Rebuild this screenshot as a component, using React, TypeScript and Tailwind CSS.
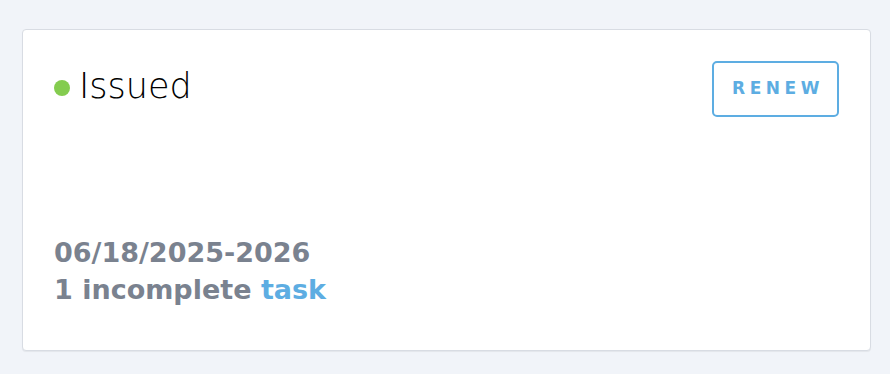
import React from "react";

const App: React.FC = () => {
  return (
    <div className="w-[890px] h-[374px] bg-[#f1f4f9] pt-[29px] pl-[22px] pr-[19px]" style={{ fontFamily: '"DejaVu Sans", sans-serif' }}>
      <div className="h-[322px] bg-white border border-[#d8dce3] rounded-[4px] shadow-[0_1px_1px_rgba(0,0,0,0.06)] px-[31px] pt-[31px] flex flex-col">
        <div className="flex justify-between items-start">
          <div className="flex items-start gap-[9px] mt-[5px]">
            <span className="w-[16px] h-[16px] mt-[14px] rounded-full bg-[#84cc4f]" />
            <span className="text-[35px] leading-[40px] font-extralight text-black">Issued</span>
          </div>
          <button className="w-[127px] h-[56px] border-2 border-[#5dade2] rounded-[5px] text-[#5dade2] text-[17px] font-bold tracking-[4.5px] flex items-center justify-center pl-[5px]">
            RENEW
          </button>
        </div>
        <div className="mt-[117px] text-[#7a828f] font-bold text-[27px] leading-[37px]">
          <div>06/18/2025-2026</div>
          <div>
            1 incomplete <span className="text-[#5dade2]">task</span>
          </div>
        </div>
      </div>
    </div>
  );
};

export default App;
